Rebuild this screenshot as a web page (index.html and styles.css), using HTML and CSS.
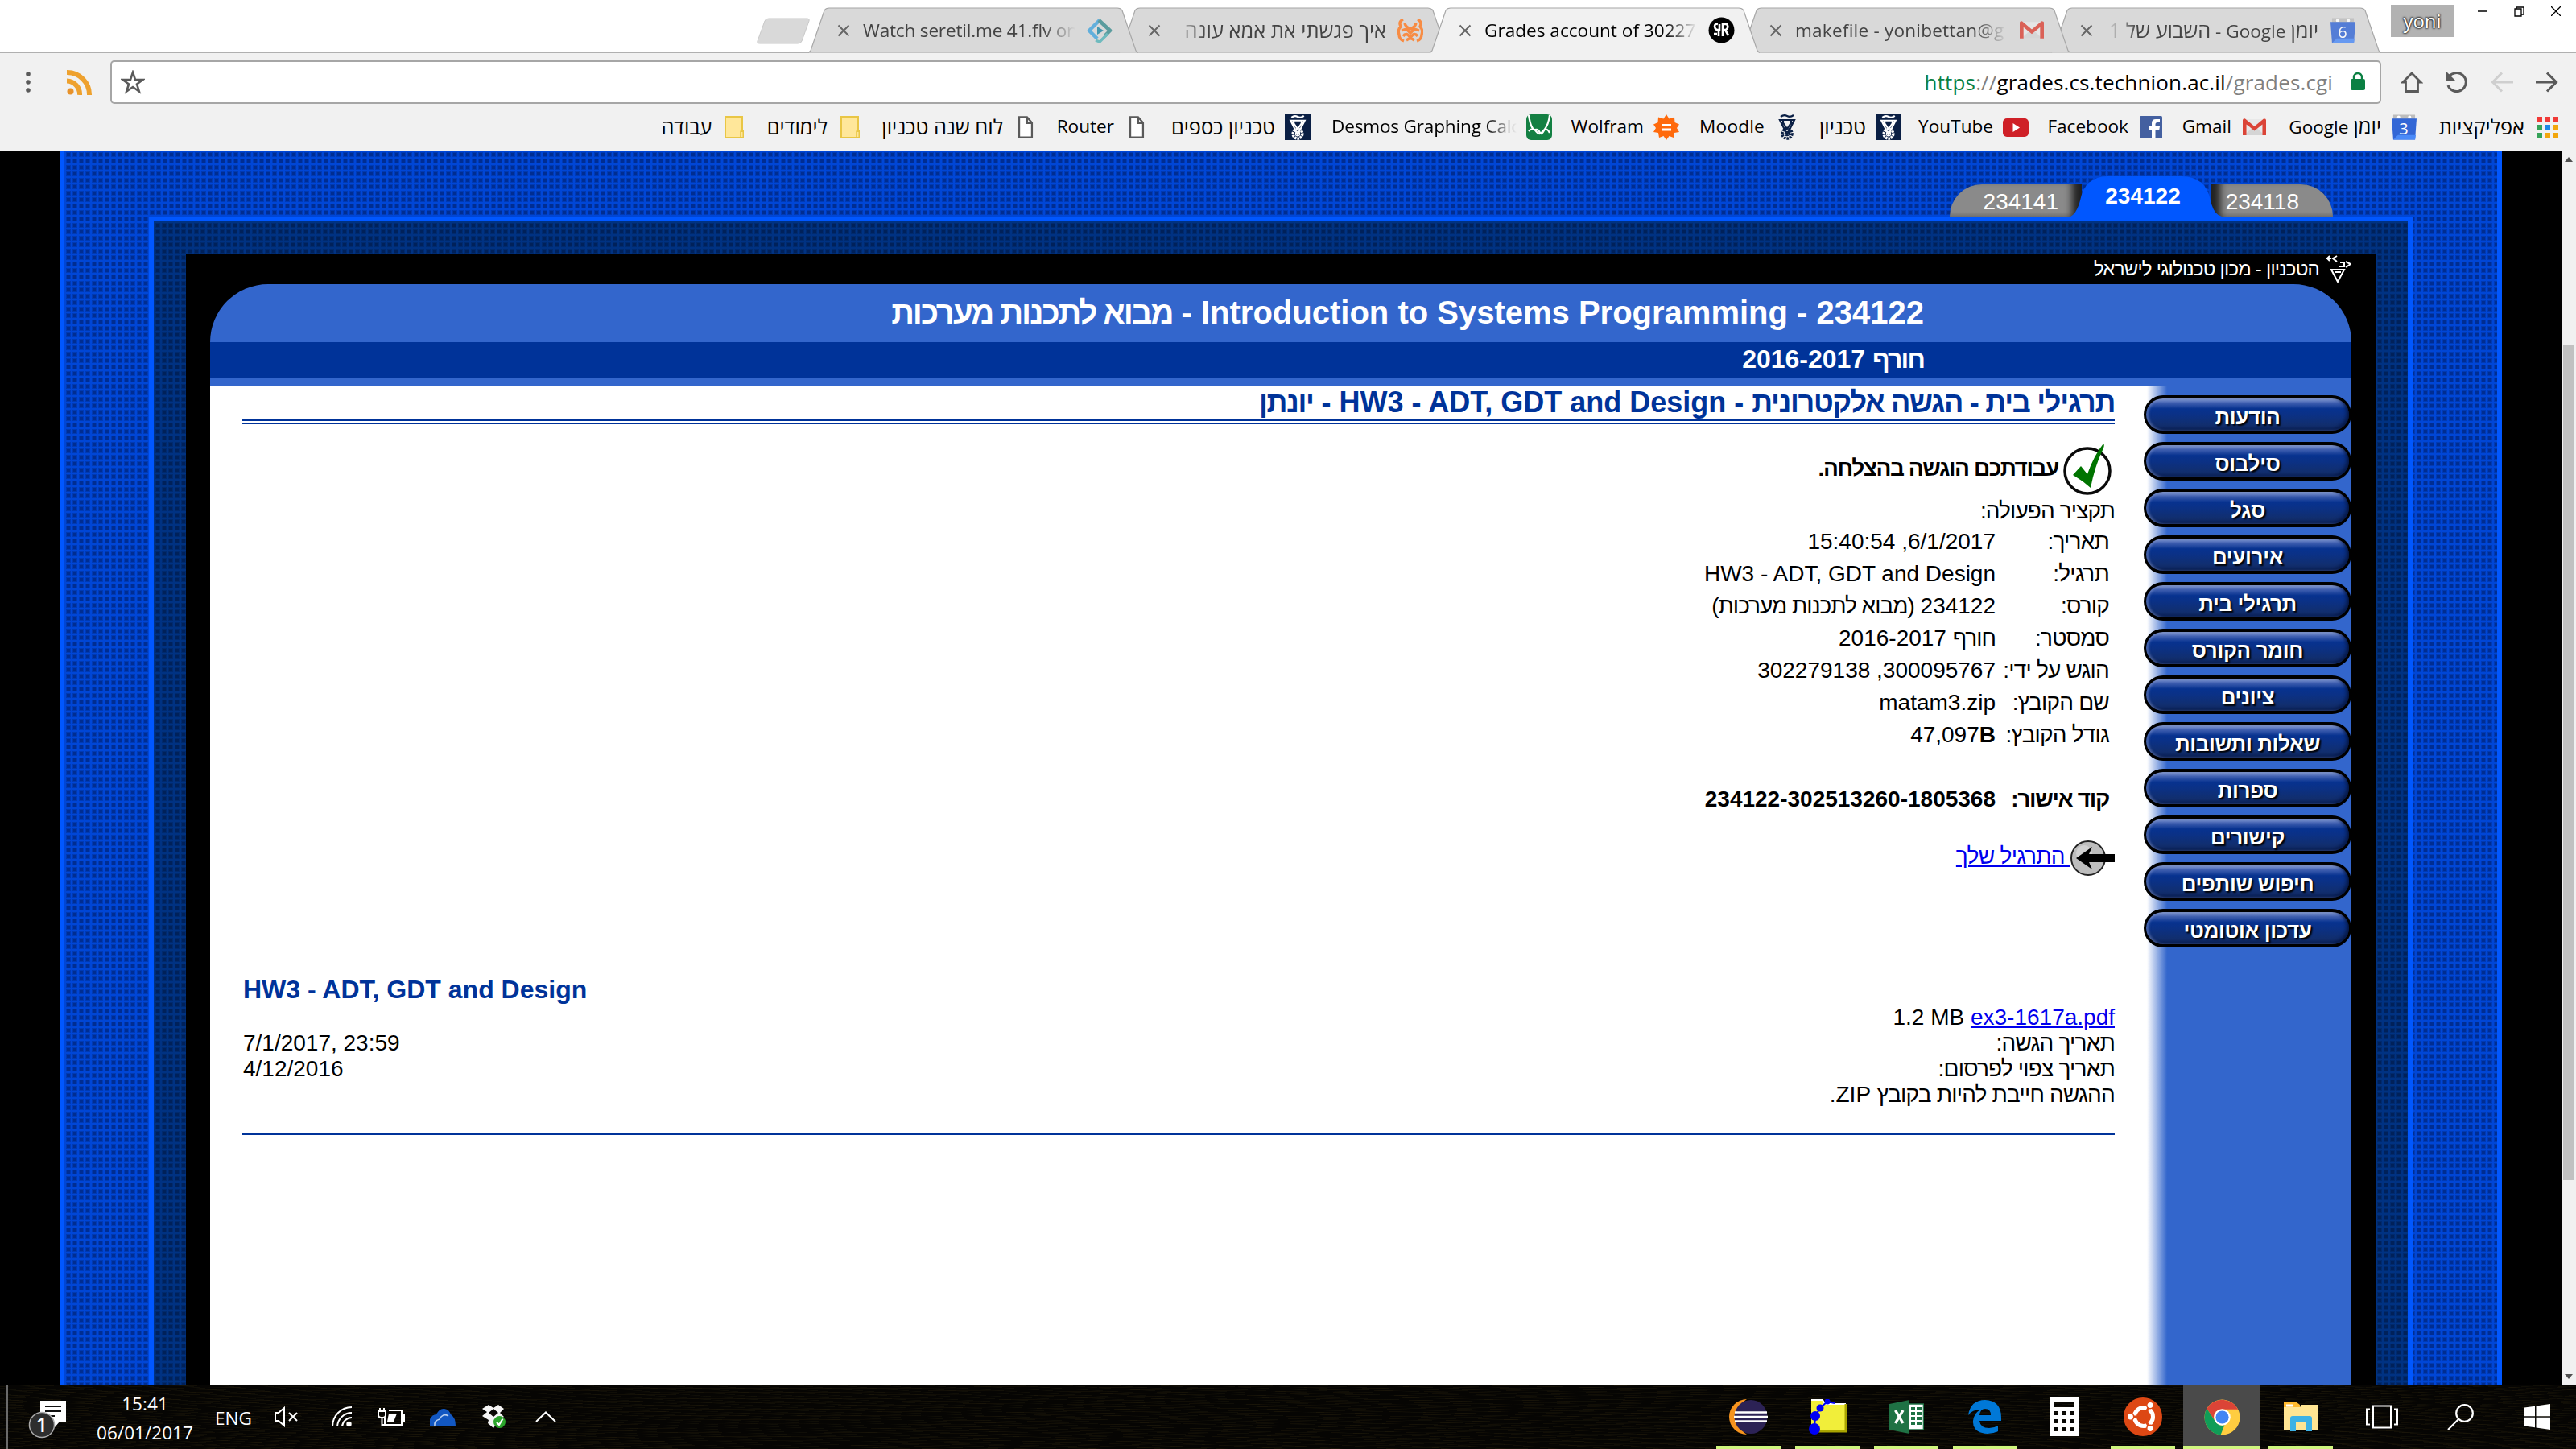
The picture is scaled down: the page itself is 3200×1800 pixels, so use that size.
FILE: index.html
```html
<!DOCTYPE html>
<html lang="he" dir="rtl">
<head>
<meta charset="utf-8">
<title>Grades account of 302279138</title>
<link rel="stylesheet" href="styles.css">
</head>
<body>
<svg class="defs" width="0" height="0" aria-hidden="true">
  <symbol id="tab" viewBox="0 0 410 57"><path d="M0 56.5 L3 54 L20 4 Q22 1 26 1 H384 Q388 1 390 4 L407 54 L410 56.5"/></symbol>
  <symbol id="x" viewBox="0 0 16 16"><path d="M1.5 1.5 L14.5 14.5 M14.5 1.5 L1.5 14.5" fill="none" stroke="currentColor" stroke-width="2"/></symbol>
  <symbol id="gmail" viewBox="0 0 32 24"><path d="M2 1 H30 V23 H2Z" fill="#e8e8e8"/><path d="M2 23 L16 10 L30 23Z" fill="#d5d5d5"/><path d="M0 2 Q0 0 3 0 L16 11 L29 0 Q32 0 32 2 V23 H27 V8 L16 17 L5 8 V23 H0Z" fill="#db4437"/></symbol>
  <symbol id="cal" viewBox="0 0 32 32"><path d="M2 0 H30 V6 H2Z" fill="#bdbdbd"/><circle cx="9" cy="3" r="2" fill="#fff"/><circle cx="23" cy="3" r="2" fill="#fff"/><path d="M0 5 H32 L30 32 H2Z" fill="#3367d6"/><path d="M8 26 H31 L30 32 H2Z" fill="#4a8af8"/></symbol>
  <symbol id="torch" viewBox="0 0 24 32"><path d="M4 3 Q8 0 12 2 T20 1 M3 7 H21 L12 25Z M6 9 L12 18 L18 9 M7 6 V12 M17 6 V12" fill="none" stroke="currentColor" stroke-width="2.2"/><circle cx="12" cy="24" r="6" fill="none" stroke="currentColor" stroke-width="3.6" stroke-dasharray="2.6 1"/><circle cx="12" cy="24" r="2.6" fill="none" stroke="currentColor" stroke-width="1.4"/></symbol>
  <symbol id="doc" viewBox="0 0 20 30"><path d="M1.5 1.5 H12 L18.5 9 V28.5 H1.5Z M12 1.5 V9.5 H18.5" fill="#fff" stroke="#5a5a5a" stroke-width="2.4"/></symbol>
  <symbol id="folder" viewBox="0 0 24 28"><path d="M1 1 H22 V19 H23.5 V27 H1Z" fill="#ffe79a" stroke="#e9c645" stroke-width="2"/><path d="M20 27 V20 Q20 18 22 18" fill="none" stroke="#e9c645" stroke-width="1.6"/></symbol>
</svg>

<header class="browser">
  <div class="tabstrip">
    <div class="win">
      <svg width="12" height="12" viewBox="0 0 12 12"><path d="M0 0 L12 12 M12 0 L0 12" stroke="#000" stroke-width="1.3"/></svg>
      <svg width="13" height="13" viewBox="0 0 13 13"><path d="M1 3 H9 V12 H1Z M3 3 V1 H12 V10 H9" fill="none" stroke="#000" stroke-width="1.3"/></svg>
      <svg width="12" height="12" viewBox="0 0 12 12"><path d="M0 6 H12" stroke="#000" stroke-width="1.5"/></svg>
      <span class="user">yoni</span>
    </div>
    <div class="tabs">
      <div class="tab"><svg class="shape"><use href="#tab"/></svg>
        <span class="fav"><svg width="31" height="32"><use href="#cal"/></svg><b class="num">6</b></span><span class="name fade-l"><span class="heb">יומן</span> Google - <span class="heb">השבוע של 1</span></span><svg class="close"><use href="#x"/></svg></div>
      <div class="tab"><svg class="shape"><use href="#tab"/></svg>
        <span class="fav"><svg width="30" height="23"><use href="#gmail"/></svg></span><span class="name fade-r wide" dir="ltr">makefile - yonibettan@g</span><svg class="close"><use href="#x"/></svg></div>
      <div class="tab active"><svg class="shape"><use href="#tab"/></svg>
        <span class="fav"><svg width="33" height="33" viewBox="0 0 33 33"><circle cx="16.5" cy="16.5" r="16" fill="#000"/><path d="M8 12 Q8 8 12 9 M8 12 Q9 17 14 16 V9 M13 16 V24 M18 24 V9 H23 Q26 13 22 16 H18 M21 16 L25 23 M7 21 H11" fill="none" stroke="#fff" stroke-width="2.6"/></svg></span><span class="name fade-r" dir="ltr">Grades account of 30227</span><svg class="close"><use href="#x"/></svg></div>
      <div class="tab"><svg class="shape"><use href="#tab"/></svg>
        <span class="fav"><svg width="32" height="30" viewBox="0 0 32 30"><path d="M7 1 Q1 4 4 10 Q0 14 2 20 Q2 26 8 28 M25 1 Q31 4 28 10 Q32 14 30 20 Q30 26 24 28 M9 5 Q9 10 16 13 Q23 10 23 5 M5 15 L11 13 L16 18 L21 13 L27 15 M7 22 Q11 16 16 24 Q21 16 25 22 M11 27 L16 24 L21 27" fill="none" stroke="#ff7a20" stroke-width="3.4"/></svg></span><span class="name fade-l"><span class="heb">איך פגשתי את אמא עונה</span></span><svg class="close"><use href="#x"/></svg></div>
      <div class="tab"><svg class="shape"><use href="#tab"/></svg>
        <span class="fav"><svg width="32" height="32" viewBox="0 0 32 32"><path d="M16 3 L3 16 L13 26" fill="none" stroke="#45a5dd" stroke-width="4.5" stroke-linejoin="round"/><path d="M15 3 L29 16 L22 23" fill="none" stroke="#3c8e90" stroke-width="4.5" stroke-linejoin="round"/><path d="M11 28 L16 30 L26 20" fill="none" stroke="#55b3b8" stroke-width="3.5"/><path d="M13 11 L21 16 L13 21Z" fill="#1e87a5"/></svg></span><span class="name fade-r tight" dir="ltr">Watch seretil.me 41.flv on</span><svg class="close"><use href="#x"/></svg></div>
    </div>
    <svg class="newtab" width="66" height="34" viewBox="0 0 66 34"><path d="M15 1 H62 Q66 1 65 4 L56 29 Q55 32 51 32 H4 Q0 32 1 29 L10 4 Q11 1 15 1Z" fill="#d9d9d9" stroke="#c9c9c9"/></svg>
  </div>

  <div class="toolbar">
    <div class="nav">
      <svg width="28" height="26" viewBox="0 0 28 26"><path d="M0 13 H25 M14 1.5 L25.5 13 L14 24.5" fill="none" stroke="#5a5a5a" stroke-width="3"/></svg>
      <svg width="28" height="26" viewBox="0 0 28 26"><path d="M28 13 H3 M14 1.5 L2.5 13 L14 24.5" fill="none" stroke="#cfcfcf" stroke-width="3"/></svg>
      <svg width="28" height="28" viewBox="0 0 28 28"><path d="M4.5 6 Q9 2.5 14 2.5 A11.5 11.5 0 1 1 3 18" fill="none" stroke="#5a5a5a" stroke-width="3"/><path d="M1 1 V12 H12Z" fill="#5a5a5a"/></svg>
      <svg width="28" height="26" viewBox="0 0 28 26"><path d="M6.5 13 V24.5 H21.5 V13 H25 L14 2 L3 13Z" fill="none" stroke="#5a5a5a" stroke-width="2.8"/></svg>
    </div>
    <div class="omnibox">
      <svg class="lock" width="18" height="22" viewBox="0 0 18 22"><rect x="0" y="8" width="18" height="14" rx="2" fill="#0b8043"/><path d="M4 9 V6 A5 5 0 0 1 14 6 V9" fill="none" stroke="#0b8043" stroke-width="2.4"/></svg>
      <span class="url" dir="ltr"><i class="secure">https</i><i class="dim">://</i>grades.cs.technion.ac.il<i class="dim">/grades.cgi</i></span>
      <svg class="star" width="30" height="30" viewBox="0 0 30 30"><path d="M15 3 L18 12 L27.5 12 L20 17.5 L22.8 26.5 L15 21 L7.2 26.5 L10 17.5 L2.5 12 L12 12Z" fill="none" stroke="#5a5a5a" stroke-width="2.6"/></svg>
    </div>
    <svg class="rss" width="32" height="32" viewBox="0 0 32 32"><circle cx="4.5" cy="27.5" r="4" fill="#e8922a"/><path d="M0 14.5 A16.5 16.5 0 0 1 16 32 M0 4 A27.5 27.5 0 0 1 28 32" fill="none" stroke="#eea12e" stroke-width="6"/></svg>
    <svg class="dots" width="6" height="28" viewBox="0 0 6 28"><circle cx="3" cy="4" r="2.8" fill="#5a5a5a"/><circle cx="3" cy="14" r="2.8" fill="#5a5a5a"/><circle cx="3" cy="24" r="2.8" fill="#5a5a5a"/></svg>
  </div>

  <nav class="bookmarks">
    <a class="bm" style="width:178px"><span class="ico"><svg width="27" height="27" viewBox="0 0 27 27"><path d="M0 0h7v7H0zM10 0h7v7h-7zM20 0h7v7h-7z" fill="#f03a37"/><path d="M0 10h7v7H0zM0 20h7v7H0z" fill="#35a358"/><path d="M10 10h7v7h-7z" fill="#1e88e5"/><path d="M20 10h7v7h-7zM10 20h7v7h-7zM20 20h7v7h-7z" fill="#f2a60d"/></svg></span><span class="heb">אפליקציות</span></a>
    <a class="bm" style="width:186px"><span class="ico"><svg width="31" height="32"><use href="#cal"/></svg><b class="num">3</b></span><span><span class="heb">יומן</span> Google</span></a>
    <a class="bm" style="width:128px"><span class="ico"><svg width="29" height="22"><use href="#gmail"/></svg></span><span>Gmail</span></a>
    <a class="bm" style="width:168px"><span class="ico"><svg width="28" height="28" viewBox="0 0 28 28"><rect width="28" height="28" rx="1.5" fill="#4460a0"/><path d="M15 28 V17 H11 V13 H15 V9 Q15 4 20 4 H25 V8 H22 Q19.5 8 19.5 10.5 V13 H25 L24.3 17 H19.5 V28Z" fill="#fff"/></svg></span><span>Facebook</span></a>
    <a class="bm" style="width:158px"><span class="ico"><svg width="32" height="23" viewBox="0 0 32 23"><rect width="32" height="23" rx="5" fill="#cf2027"/><path d="M12.5 6 L21 11.5 L12.5 17Z" fill="#fff"/></svg></span><span>YouTube</span></a>
    <a class="bm" style="width:126px"><span class="ico shield"><svg width="24" height="31"><use href="#torch"/></svg></span><span class="heb">טכניון</span></a>
    <a class="bm" style="width:150px"><span class="ico torch"><svg width="24" height="32"><use href="#torch"/></svg></span><span class="wide">Moodle</span></a>
    <a class="bm" style="width:158px"><span class="ico"><svg width="32" height="32" viewBox="0 0 32 32"><path d="M16 0 L19.5 5.5 L26 3.5 L26.5 10 L32 12.5 L29 17 L32 22 L26 23 L25 29 L19.5 27 L16 32 L12.5 27 L7 29 L6 23 L0 22 L3 17 L0 12.5 L5.5 10 L6 3.5 L12.5 5.5Z" fill="#ff6a0c"/><path d="M10 13.5 H22 M10 19 H22" stroke="#fff" stroke-width="2.8"/></svg></span><span>Wolfram</span></a>
    <a class="bm" style="width:300px"><span class="ico"><svg width="32" height="32" viewBox="0 0 32 32"><rect width="32" height="32" rx="6" fill="#148043"/><path d="M3 1 Q6 20 11 19 Q15 18 17 23 Q19 26 22 20 Q28 12 29 1 M3 21 Q8 15 13 22 Q17 27 21 20 Q26 16 29 23" fill="none" stroke="#fff" stroke-width="2.2"/></svg></span><span class="fade-r clip tight" dir="ltr">Desmos Graphing Calc</span></a>
    <a class="bm" style="width:200px"><span class="ico shield"><svg width="24" height="31"><use href="#torch"/></svg></span><span class="heb">טכניון כספים</span></a>
    <a class="bm" style="width:138px"><span class="ico"><svg width="20" height="28"><use href="#doc"/></svg></span><span>Router</span></a>
    <a class="bm" style="width:218px"><span class="ico"><svg width="20" height="28"><use href="#doc"/></svg></span><span class="heb">לוח שנה טכניון</span></a>
    <a class="bm" style="width:144px"><span class="ico"><svg width="24" height="28"><use href="#folder"/></svg></span><span class="heb">לימודים</span></a>
    <a class="bm"><span class="ico"><svg width="24" height="28"><use href="#folder"/></svg></span><span class="heb tight">עבודה</span></a>
  </nav>
</header>

<div class="viewport">
  <div class="scrollbar">
    <svg width="10" height="6" viewBox="0 0 10 6"><path d="M0 6 L5 0 L10 6Z" fill="#505050"/></svg>
    <span class="thumb"></span>
    <svg width="10" height="6" viewBox="0 0 10 6"><path d="M0 0 L5 6 L10 0Z" fill="#505050"/></svg>
  </div>
  <div class="outer">
    <div class="courses">
      <a class="course first"><span>234118</span></a>
      <a class="course current"><svg width="188" height="50" viewBox="0 0 188 50"><path d="M0 50 Q8 46 12 30 Q18 0 46 0 H138 Q168 0 174 30 Q178 48 188 50Z" fill="#0057ff"/></svg><span>234122</span></a>
      <a class="course last"><span>234141</span></a>
    </div>
    <div class="inner">
      <div class="site">
        <div class="institute">
          <svg width="32" height="34" viewBox="0 0 32 34"><path d="M7 18 H23 L15 33Z M11 21 H19 M1 4 H7 M5 1 L2 4 L5 7 M14 1 L9 4 L14 8 M17 14 L23 14 L23 9 L18 9 M25 8 L31 11 L25 15" fill="none" stroke="#fff" stroke-width="2"/></svg>
          <span>הטכניון - מכון טכנולוגי לישראל</span>
        </div>
        <div class="banner">234122 - Introduction to Systems Programming - <span class="he">מבוא לתכנות מערכות</span></div>
        <div class="term"><span class="he">חורף</span> 2016-2017</div>
        <div class="body">
          <nav class="side">
            <a>הודעות</a>
            <a>סילבוס</a>
            <a>סגל</a>
            <a>אירועים</a>
            <a>תרגילי בית</a>
            <a>חומר הקורס</a>
            <a>ציונים</a>
            <a>שאלות ותשובות</a>
            <a>ספרות</a>
            <a>קישורים</a>
            <a>חיפוש שותפים</a>
            <a>עדכון אוטומטי</a>
          </nav>
          <main class="main">
            <h1><span class="he">תרגילי בית - הגשה אלקטרונית</span> - HW3 - ADT, GDT and Design - <span class="he">יונתן</span></h1>
            <div class="success">
              <svg width="60" height="66" viewBox="0 0 60 66"><circle cx="30" cy="35" r="28" fill="#fff" stroke="#0a0a0a" stroke-width="3.5"/><path d="M12 40 L22 29 L30 39 Q38 16 50 1 Q52 3 49 9 Q39 30 34 56 Q24 47 12 40Z" fill="#007400"/></svg>
              <b>עבודתכם הוגשה בהצלחה.</b>
            </div>
            <p class="summary he">תקציר הפעולה:</p>
            <dl class="details">
              <dt>תאריך:</dt><dd>6/1/2017, 15:40:54</dd>
              <dt>תרגיל:</dt><dd>HW3 - ADT, GDT and Design</dd>
              <dt>קורס:</dt><dd>234122 <span class="he">(מבוא לתכנות מערכות)</span></dd>
              <dt>סמסטר:</dt><dd><span class="he">חורף</span> 2016-2017</dd>
              <dt>הוגש על ידי:</dt><dd>300095767, 302279138</dd>
              <dt>שם הקובץ:</dt><dd>matam3.zip</dd>
              <dt>גודל הקובץ:</dt><dd><bdi dir="ltr">47,097<b>B</b></bdi></dd>
              <dt class="code"><b>קוד אישור:</b></dt><dd class="code"><b dir="ltr">234122-302513260-1805368</b></dd>
            </dl>
            <div class="back">
              <svg width="55" height="46" viewBox="0 0 55 46"><circle cx="22" cy="23" r="21" fill="#bdbdbd" stroke="#222" stroke-width="2"/><circle cx="17" cy="17" r="10" fill="#dedede" opacity=".6"/><path d="M7 23 L27 9 L23 18 H55 V28 H23 L27 37Z" fill="#000"/></svg>
              <a class="link he">&nbsp;התרגיל שלך</a>
            </div>
            <section class="hw">
              <h2 dir="ltr">HW3 - ADT, GDT and Design</h2>
              <div class="line"><span><a class="link">ex3-1617a.pdf</a> <bdi>1.2 MB</bdi></span></div>
              <div class="line"><span class="he">תאריך הגשה:</span><span dir="ltr">7/1/2017, 23:59</span></div>
              <div class="line"><span class="he">תאריך צפוי לפרסום:</span><span dir="ltr">4/12/2016</span></div>
              <div class="line"><span><span class="he">ההגשה חייבת להיות בקובץ</span> ZIP.</span></div>
            </section>
          </main>
        </div>
      </div>
    </div>
  </div>
</div>

<footer class="taskbar" dir="ltr">
  <div class="tray">
    <svg class="notes" width="50" height="54" viewBox="0 0 50 54"><path d="M15 7 H47 V33 H39 L33 40 V33 H15Z" fill="#fff"/><path d="M21 14 H41 M21 20 H41 M21 26 H33" stroke="#111" stroke-width="2.2"/><circle cx="17" cy="37" r="15.5" fill="#2e2e2e" stroke="#aaa" stroke-width="1.5"/><text x="17" y="46" fill="#fff" font-size="25" font-weight="600" text-anchor="middle">1</text></svg>
    <div class="clock"><span>15:41</span><span>06/01/2017</span></div>
    <span class="lang">ENG</span>
    <svg class="t1" width="30" height="26" viewBox="0 0 30 26"><path d="M1 8 H5 L12 2 V24 L5 18 H1Z M18 8 L28 18 M28 8 L18 18" fill="none" stroke="#fff" stroke-width="2"/></svg>
    <svg class="t2" width="26" height="26" viewBox="0 0 26 26"><path d="M1 25 A24 24 0 0 1 25 1 M7 25 A18 18 0 0 1 25 8 M13 25 A12 12 0 0 1 25 14" fill="none" stroke="#fff" stroke-width="2"/><circle cx="21.5" cy="22" r="3.2" fill="#fff"/></svg>
    <svg class="t3" width="34" height="24" viewBox="0 0 34 24"><path d="M14 4 H30 V22 H9 V14 M30 9 H33 V17 H30 M3 1 V5 M8 1 V5" fill="none" stroke="#fff" stroke-width="2"/><path d="M1 5 H10 V10 Q10 13 5.5 13 Q1 13 1 10Z M5.5 13 V22 H11" fill="none" stroke="#fff" stroke-width="2"/><path d="M14 8 H24 L20 18 H12Z" fill="#fff"/></svg>
    <svg class="t4" width="32" height="23" viewBox="0 0 32 23"><path d="M0 22 V14 Q3 8 8 8 Q12 0 18 1 Q24 2 26 8 Q32 12 32 22Z" fill="#1257c2"/><path d="M6 22 Q5 16 12 14 Q16 6 23 10" fill="none" stroke="#b9d0f0" stroke-width="1.6"/></svg>
    <svg class="t5" width="30" height="30" viewBox="0 0 30 30"><path d="M8 0 L14 4 L20 0 L27 5 L22 10 L27 15 L21 19 L14 29 L7 23 L8 19 L0 14 L6 9 L0 5Z M14 5 L8 10 L14 15 L20 10Z" fill="#f5f5f5" fill-rule="evenodd"/><circle cx="21.5" cy="21.5" r="7.5" fill="#2ba52b"/><path d="M18 22 L21 25 L25.5 17.5" fill="none" stroke="#fff" stroke-width="2.2"/></svg>
    <svg class="t6" width="26" height="14" viewBox="0 0 26 14"><path d="M1 13 L13 1.5 L25 13" fill="none" stroke="#fff" stroke-width="2"/></svg>
  </div>
  <div class="apps">
    <span class="app run"><svg width="48" height="46" viewBox="0 0 48 46"><path d="M22 1 A22 22 0 0 0 22 45 A26 26 0 0 1 22 1Z" fill="#f7941e"/><ellipse cx="27" cy="23" rx="20.5" ry="21" fill="#2c2255"/><path d="M7 17.5 H47 M6 23 H48 M7 28.5 H47" stroke="#fff" stroke-width="2.6"/></svg></span>
    <span class="app run"><svg width="47" height="44" viewBox="0 0 47 44"><path d="M3 1 H17 L20 6 H46 V40 H10 L3 34Z" fill="#f1ee3a"/><path d="M3 1 H17 L20 6 H46" fill="none" stroke="#fff" stroke-width="2"/><path d="M46 6 V40 H10" fill="none" stroke="#a9a400" stroke-width="3"/><circle cx="7" cy="37" r="7" fill="#0000f5"/><circle cx="8" cy="21" r="6" fill="#0000f5"/><circle cx="14" cy="11" r="4.5" fill="#0000f5"/><circle cx="23" cy="3" r="3.5" fill="#0000f5"/><path d="M7 37 L8 21 L14 11 L23 3 L32 5" fill="none" stroke="#0000f5" stroke-width="2"/></svg></span>
    <span class="app run"><svg width="43" height="42" viewBox="0 0 43 42"><path d="M24 5 H43 V37 H24Z" fill="#fff"/><path d="M24 5 H42.5 V37 H24" fill="none" stroke="#1f7244" stroke-width="1.6"/><path d="M27 9h5v4h-5zM34 9h6v4h-6zM27 15h5v4h-5zM34 15h6v4h-6zM27 21h5v4h-5zM34 21h6v4h-6zM27 27h5v4h-5zM34 27h6v4h-6z" fill="#1f7244"/><path d="M0 5 L25 0 V42 L0 37Z" fill="#1f7244"/><path d="M7.5 13 L17 29 M17 13 L7.5 29" stroke="#fff" stroke-width="3.4"/></svg></span>
    <span class="app run"><svg width="42" height="42" viewBox="0 0 42 42"><path d="M0 19 Q3 0 21 0 Q41 1 41 22 V26 H14 Q15 35 26 35 Q32 35 37 32 V39 Q31 42 24 42 Q5 41 6 26 Q7 17 15 12 Q5 12 0 19Z M14 19 H28 Q28 11 21 11 Q15 11 14 19Z" fill="#0078d7" fill-rule="evenodd"/></svg></span>
    <span class="app"><svg width="36" height="48" viewBox="0 0 36 48"><path d="M0 0 H36 V48 H0Z M5 5 V12 H31 V5Z M5 17 V22 H10 V17Z M15.5 17 V22 H20.5 V17Z M26 17 V22 H31 V17Z M5 27 V32 H10 V27Z M15.5 27 V32 H20.5 V27Z M26 27 V32 H31 V27Z M5 37 V42 H10 V37Z M15.5 37 V42 H20.5 V37Z M26 37 V42 H31 V37Z" fill="#fff" fill-rule="evenodd"/></svg></span>
    <span class="app run"><svg width="48" height="48" viewBox="0 0 48 48"><circle cx="24" cy="24" r="24" fill="#dd4814"/><circle cx="25" cy="24" r="11.5" fill="none" stroke="#fff" stroke-width="5"/><path d="M25 24 L8 24 M25 24 L33 9 M25 24 L33 39" stroke="#dd4814" stroke-width="3"/><g fill="#fff" stroke="#dd4814" stroke-width="1.5"><circle cx="8.5" cy="24" r="4.2"/><circle cx="33" cy="9.5" r="4.2"/><circle cx="33" cy="38.5" r="4.2"/></g></svg></span>
    <span class="app run focus"><svg width="45" height="45" viewBox="0 0 46 46"><circle cx="23" cy="23" r="22.5" fill="#ffcd40"/><path d="M3.5 12 A22.5 22.5 0 0 1 43 13 H23 A10 10 0 0 0 14 28Z" fill="#db4437"/><path d="M3.5 12 L14 28 A10 10 0 0 0 26 33 L21 45.5 A22.5 22.5 0 0 1 3.5 12Z" fill="#0f9d58"/><circle cx="23" cy="23" r="10.5" fill="#fff"/><circle cx="23" cy="23" r="8.3" fill="#4285f4"/></svg></span>
    <span class="app run"><svg width="43" height="36" viewBox="0 0 43 36"><path d="M0 0 H16 L20 3 V6 H0Z" fill="#ffb92e"/><path d="M3 2.5 h9 v3 h-9z" fill="#fff"/><path d="M0 6 H20 L22 3 H42 V34 H0Z" fill="#ffe593"/><path d="M8 20 Q8 17 11 17 H32 Q35 17 35 20 V36 H28 V25 H15 V36 H8Z" fill="#3db2e6"/></svg></span>
    <span class="app sys"><svg width="40" height="30" viewBox="0 0 40 30"><path d="M9 1.5 H31 V28.5 H9Z M5 5.5 H1 V24.5 H5 M35 5.5 H39 V24.5 H35" fill="none" stroke="#fff" stroke-width="2"/></svg></span>
    <span class="app sys"><svg width="34" height="33" viewBox="0 0 34 33"><circle cx="21.5" cy="11.5" r="10.3" fill="none" stroke="#fff" stroke-width="2.2"/><path d="M14 19 L1 32" stroke="#fff" stroke-width="2.2"/></svg></span>
    <span class="app"><svg width="32" height="32" viewBox="0 0 32 32"><path d="M0 4.5 L13 2.8 V15.3 H0Z M14.5 2.5 L32 0 V15.3 H14.5Z M0 16.7 H13 V29.2 L0 27.5Z M14.5 16.7 H32 V32 L14.5 29.5Z" fill="#fff"/></svg></span>
  </div>
</footer>
</body>
</html>
```
FILE: styles.css
```css
* { box-sizing: border-box; }
html, body { margin: 0; }
body { width: 3200px; height: 1800px; overflow: hidden; background: #000; font-family: "Liberation Sans", Arial, sans-serif; font-size: 28px; line-height: 32px; color: #000; }
svg { display: block; flex: none; }
.defs { position: absolute; }
a { white-space: nowrap; }
i { font-style: normal; }
.he { letter-spacing: -.9px; }

/* browser chrome */
.browser, .taskbar { font-family: "Open Sans", "Noto Sans", sans-serif; font-size: 22.6px; }
.heb { font-size: 25.4px; }
.tight { letter-spacing: -.2px; }
.wide { letter-spacing: .2px; }
.browser { height: 188px; background: #f1f1f1; border-bottom: 1px solid #b6b6b6; }
.tabstrip { display: flex; align-items: flex-end; height: 66px; background: linear-gradient(#b0b0b0, #b0b0b0) bottom / 100% 1px no-repeat #fff; }
.win { width: 242px; height: 66px; display: flex; align-items: flex-start; padding: 8px 19px 0 0; gap: 33px; }
.user { margin-top: -2px; margin-right: -3px; width: 78px; height: 40px; flex: none; background: #b2b2b2; color: #fff; text-align: center; line-height: 40px; font-size: 24px; text-shadow: 0 0 2px #222, 0 0 2px #222, 0 0 3px #222; }
.tabs { display: flex; }
.tab { position: relative; display: flex; align-items: center; width: 410px; height: 57px; margin-left: -24px; padding: 0 32px 0 36px; color: #444; flex: none; }
.tab .shape { position: absolute; inset: 0; width: 410px; height: 57px; fill: #d9d9d9; stroke: #a6a6a6; stroke-width: 1.2; }
.tab.active { z-index: 2; color: #000; }
.tab.active .shape { fill: #f1f1f1; }
.tab.active::after { content: ""; position: absolute; left: 2px; right: 2px; bottom: 0; height: 1px; background: #f1f1f1; }
.fav, .ico { position: relative; display: flex; align-items: center; justify-content: center; width: 32px; height: 34px; flex: none; }
.tab:not(.active) .fav { opacity: .8; }
.num { position: absolute; inset: 4px 0 0; text-align: center; color: #fff; font-size: 20px; line-height: 30px; font-weight: 400; }
.name { position: relative; width: 264px; margin-right: 14px; overflow: hidden; white-space: nowrap; }
.fade-r { -webkit-mask-image: linear-gradient(to left, transparent, #000 40px); mask-image: linear-gradient(to left, transparent, #000 40px); }
.fade-l { -webkit-mask-image: linear-gradient(to right, transparent, #000 40px); mask-image: linear-gradient(to right, transparent, #000 40px); }
.close { position: relative; width: 16px; height: 16px; margin-right: 16px; color: #666; }
.newtab { margin: 0 22px 10px 0; }

.toolbar { display: flex; align-items: center; height: 63px; padding: 9px 22px 0 32px; }
.nav { display: flex; align-items: center; gap: 28px; width: 220px; flex: none; }
.omnibox { flex: none; width: 2821px; height: 54px; background: #fff; border: 2px solid #a6a6a6; border-radius: 5px; display: flex; align-items: center; padding: 0 18px 0 11px; }
.url { margin-right: 22px; font-size: 26px; letter-spacing: .15px; }
.lock { margin-bottom: 2px; }
.secure { color: #0b8043; }
.dim { color: #808080; }
.star { margin-right: auto; }
.rss { margin-right: 22px; }
.dots { margin-right: auto; }

.bookmarks { display: flex; align-items: center; height: 58px; padding-right: 20px; }
.bm { display: flex; align-items: center; gap: 12px; flex: none; }
.bm > span:last-child { margin-top: -2px; }
.shield { background: #0a1f44; color: #fff; height: 32px; }
.torch { color: #0a1f44; }
.clip { width: 230px; overflow: hidden; }

/* page viewport */
.viewport { display: flex; height: 1532px; overflow: hidden; background: #000; }
.scrollbar { width: 18px; flex: none; background: #f1f1f1; display: flex; flex-direction: column; align-items: center; padding: 7px 0; }
.thumb { width: 14px; height: 1037px; background: #c1c1c1; margin: 228px 0 auto; }
.outer { width: 3034px; flex: none; margin-right: 74px; border: solid #0057ff; border-width: 0 6px; display: flex; flex-direction: column;
  background:
    linear-gradient(90deg, #0046d6 2px, transparent 2px) 0 0 / 8px 8px,
    linear-gradient(#0046d6 2px, transparent 2px) 0 -1px / 8px 8px,
    linear-gradient(90deg, #003ab4 3px, transparent 3px 7px, #003ab4 7px) 0 0 / 8px 8px,
    linear-gradient(#003ab4 3px, transparent 3px 7px, #003ab4 7px) 0 -1px / 8px 8px, #002d92; }
.courses { display: flex; align-items: flex-end; height: 81px; padding-right: 204px; flex: none; }
.course { height: 40px; color: #fff; line-height: 43px; display: flex; background: linear-gradient(#8a8a8a, #8a8a8a 85%, #777); }
.first { width: 152px; border-radius: 0 40px 0 0; padding-right: 42px; box-shadow: inset 18px 0 10px -6px #222; margin-left: -14px; }
.last { width: 164px; border-radius: 40px 0 0 0; padding-right: 29px; box-shadow: inset -18px 0 10px -6px #222; margin-right: -14px; }
.current { position: relative; z-index: 1; width: 188px; height: 50px; background: none; font-weight: 700; justify-content: center; line-height: 49px; padding-right: 8px; }
.current svg { position: absolute; inset: 0; }
.current span { position: relative; }
.inner { flex: 1; margin: 0 105px; border: solid #0057ff; border-width: 6px 6px 0; padding: 40px 40px 0; display: flex;
  background:
    linear-gradient(90deg, #003282 2px, transparent 2px) 0 0 / 8px 8px,
    linear-gradient(#003282 2px, transparent 2px) 0 0 / 8px 8px,
    linear-gradient(90deg, #002a6e 3px, transparent 3px 7px, #002a6e 7px) 0 0 / 8px 8px,
    linear-gradient(#002a6e 3px, transparent 3px 7px, #002a6e 7px) 0 0 / 8px 8px, #00215a; }
.site { flex: 1; background: #000; padding: 0 30px; display: flex; flex-direction: column; }
.institute { display: flex; align-items: center; gap: 8px; height: 38px; color: #fff; font-size: 24px; letter-spacing: -.78px; }
.banner { height: 72px; background: #3366cc; border-radius: 72px 72px 0 0; padding-right: 531px; color: #fff; font-size: 40px; font-weight: 700; line-height: 70px; }
.banner .he { letter-spacing: -2px; }
.term { height: 54px; background: #003399; border-bottom: 10px solid #3366cc; padding-right: 531px; color: #fff; font-size: 32px; font-weight: 700; line-height: 43px; }
.term .he { letter-spacing: -1.8px; }
.body { flex: 1; display: flex; background: #fff; }
.side { width: 258px; flex: none; padding-top: 12px; display: flex; flex-direction: column; gap: 10px; background: linear-gradient(90deg, #fff 4px, #3366cc 29px); }
.side a { height: 48px; border: solid #000; border-width: 4px 3px; border-radius: 24px; text-align: center; color: #fff; font-weight: 700; font-size: 26px; line-height: 47px; letter-spacing: -.35px; text-shadow: 2px 2px 2px #000;
  background: linear-gradient(#8ea3d8, #3f5fb0 14%, #07328f 32%, #0b3186 50%, #122e6c 85%, #0c2560); box-shadow: inset 3px 0 3px #7f95cc88, inset -3px -2px 4px #06194a; }

.main { flex: 1; padding: 0 36px 0 40px; }
h1 { margin: 0; height: 48px; border-bottom: 6px double #003399; color: #003399; font-size: 36px; line-height: 42px; }
h1 .he { letter-spacing: -1.27px; }
.success { display: flex; align-items: center; gap: 6px; margin-top: 23px; padding-right: 4px; height: 66px; }
.success b { padding-bottom: 2px; letter-spacing: -1.4px; }
.summary { margin: 3px 0 2px; }
.details { margin: 0; display: grid; grid-template-columns: 148px 1fr; grid-auto-rows: 40px; line-height: 40px; }
.details dt { padding-right: 7px; white-space: nowrap; letter-spacing: -.8px; }
.details .he { letter-spacing: -1px; }
.details dd { margin: 0; }
.details .code { margin-top: 40px; }
.details dt.code { letter-spacing: -1.3px; }
.back { display: flex; align-items: center; margin-top: 70px; height: 46px; }
.link { color: #0000ee; text-decoration: underline; }
.back .link { padding-bottom: 4px; letter-spacing: -.7px; }
.hw { margin-top: 122px; padding-bottom: 32px; border-bottom: 2px solid #003399; }
h2 { margin: 0 0 1px; color: #003399; font-size: 32px; line-height: 36px; padding-left: 1px; }
.line { display: flex; justify-content: space-between; height: 32px; padding-left: 1px; }
.line .he { letter-spacing: -.8px; }

/* taskbar */
.taskbar { display: flex; justify-content: space-between; height: 80px; color: #fff;
  background:
    repeating-radial-gradient(ellipse at 30% 120%, #2a210c55 0 6px, transparent 14px 61px),
    repeating-radial-gradient(ellipse at 70% -40%, #1f1c0d66 0 5px, transparent 12px 47px), #060503; }
.tray { display: flex; align-items: center; border-left: 2px solid #6a6a6a; margin-left: 8px; }
.notes { margin-left: 25px; }
.clock { display: flex; flex-direction: column; align-items: center; justify-content: center; line-height: 36px; width: 122px; margin-left: 34px; padding-top: 3px; }
.lang { margin-left: 26px; padding-top: 3px; }
.tray .t1 { margin-left: 28px; }
.tray .t2 { margin-left: 41px; }
.tray .t3 { margin-left: 31px; }
.tray .t4 { margin-left: 31px; }
.tray .t5 { margin-left: 33px; }
.tray .t6 { margin-left: 36px; }
.apps { display: flex; margin-right: -1px; }
.app { width: 98px; height: 80px; display: flex; align-items: center; justify-content: center; }
.sys { padding-left: 6px; }
.run { background: linear-gradient(#d0f67e, #d0f67e) bottom / 80px 4px no-repeat; }
.focus { background: linear-gradient(#d0f67e, #d0f67e) bottom / 96px 4px no-repeat, linear-gradient(#4a4a4a, #4a4a4a) center / 96px 80px no-repeat; }
```
